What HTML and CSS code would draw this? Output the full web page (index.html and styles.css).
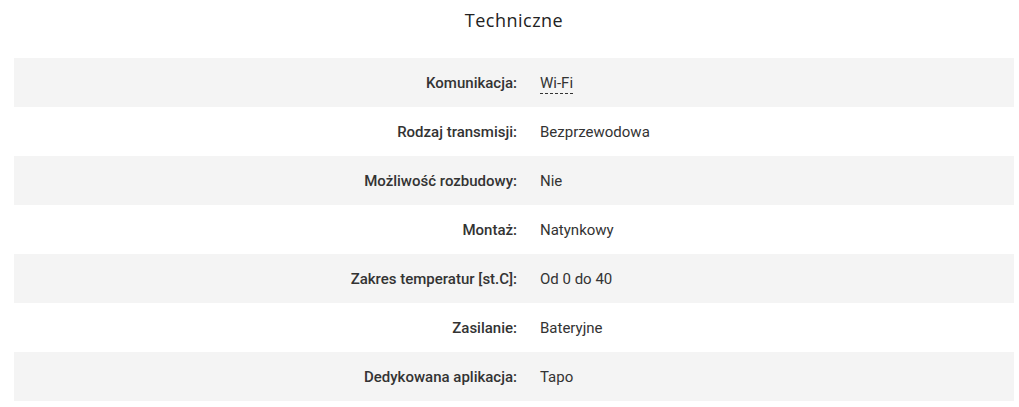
FILE: index.html
```html
<!DOCTYPE html>
<html lang="pl">
<head>
<meta charset="utf-8">
<link rel="stylesheet" href="styles.css">
</head>
<body>
<section class="specs">
  <h2 class="specs-title">Techniczne</h2>
  <div class="spec-list">
    <div class="spec-row"><div class="spec-label">Komunikacja:</div><div class="spec-value"><span class="term">Wi-Fi</span></div></div>
    <div class="spec-row"><div class="spec-label">Rodzaj transmisji:</div><div class="spec-value">Bezprzewodowa</div></div>
    <div class="spec-row"><div class="spec-label">Możliwość rozbudowy:</div><div class="spec-value">Nie</div></div>
    <div class="spec-row"><div class="spec-label">Montaż:</div><div class="spec-value">Natynkowy</div></div>
    <div class="spec-row"><div class="spec-label">Zakres temperatur [st.C]:</div><div class="spec-value">Od 0 do 40</div></div>
    <div class="spec-row"><div class="spec-label">Zasilanie:</div><div class="spec-value">Bateryjne</div></div>
    <div class="spec-row"><div class="spec-label">Dedykowana aplikacja:</div><div class="spec-value">Tapo</div></div>
  </div>
</section>
</body>
</html>
```
FILE: styles.css
```css
html, body {
  margin: 0;
  padding: 0;
  background: #fff;
}
body {
  font-family: Roboto, "Liberation Sans", sans-serif;
  color: #333;
}
.specs {
  padding: 0 5px 0 14px;
}
.specs-title {
  margin: 0;
  height: 58px;
  box-sizing: border-box;
  padding-top: 8px;
  text-align: center;
  font-family: "Open Sans", sans-serif;
  font-weight: 400;
  font-size: 18px;
  letter-spacing: 0.5px;
  line-height: 24px;
  color: #222;
}
.spec-list {
  display: flex;
  flex-direction: column;
}
.spec-row {
  display: grid;
  grid-template-columns: 513px 1fr;
  height: 49px;
  align-items: center;
  font-size: 15px;
}
.spec-row:nth-child(odd) {
  background: #f4f4f4;
}
.spec-label {
  text-align: right;
  padding-right: 10px;
  font-weight: 500;
  color: #333;
}
.spec-value {
  padding-left: 13px;
  color: #333;
}
.term {
  border-bottom: 1px dashed #333;
  padding-bottom: 1px;
}
```
